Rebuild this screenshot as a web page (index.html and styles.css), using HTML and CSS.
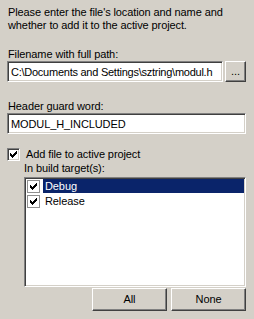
FILE: index.html
```html
<!DOCTYPE html>
<html lang="en">
<head>
  <meta charset="UTF-8" />
  <title>New File</title>
  <link rel="stylesheet" href="styles.css">
</head>
<body>
  <div class="dialog">
    <p class="intro">Please enter the file's location and name and<br>whether to add it to the active project.</p>

    <div class="field-label first">Filename with full path:</div>
    <div class="path-row">
      <input class="text-input path-input" type="text" value="C:\Documents and Settings\sztring\modul.h" />
      <button class="win-btn browse-btn">...</button>
    </div>

    <div class="field-label second">Header guard word:</div>
    <input class="text-input full" type="text" value="MODUL_H_INCLUDED" />

    <div class="check-row">
      <span class="check-box">
        <svg width="13" height="13" viewBox="0 0 13 13"><polygon points="3,5 5,7 10,2 10,5 5,10 3,8" fill="#000" shape-rendering="crispEdges"/></svg>
      </span>
      <span>Add file to active project</span>
    </div>

    <div class="targets">
      <div class="targets-label">In build target(s):</div>
      <div class="target-list">
        <div class="target-row">
          <span class="list-check">
            <svg width="11" height="11" viewBox="1 1 11 11"><polygon points="3,5 5,7 10,2 10,5 5,10 3,8" fill="#000" shape-rendering="crispEdges"/></svg>
          </span>
          <span class="target-name selected">Debug</span>
        </div>
        <div class="target-row">
          <span class="list-check">
            <svg width="11" height="11" viewBox="1 1 11 11"><polygon points="3,5 5,7 10,2 10,5 5,10 3,8" fill="#000" shape-rendering="crispEdges"/></svg>
          </span>
          <span class="target-name">Release</span>
        </div>
      </div>
      <div class="list-buttons">
        <button class="win-btn wide-btn">All</button>
        <button class="win-btn wide-btn">None</button>
      </div>
    </div>
  </div>
</body>
</html>
```

FILE: styles.css
```css
body {
  margin: 0;
  background: #d4d0c8;
  font-family: 'Liberation Sans', Arial, sans-serif;
  font-size: 11px;
  line-height: 13px;
  letter-spacing: -0.1px;
  color: #000;
}

.dialog {
  width: 239px;
  padding: 6px 8px 0 7px;
}

.intro {
  margin: 0 0 0 1px;
}

.field-label {
  padding-left: 1px;
}

.field-label.first {
  margin-top: 16px;
}

.field-label.second {
  margin-top: 18px;
}

.path-row {
  display: flex;
  gap: 2px;
}

.text-input {
  box-sizing: border-box;
  height: 21px;
  min-width: 0;
  flex: 1;
  margin: 0;
  padding: 0 2px 0 3px;
  font: inherit;
  letter-spacing: inherit;
  color: #000;
  background: #fff;
  border: 1px solid;
  border-color: #808080 #fff #fff #808080;
  box-shadow: inset 1px 1px #404040, inset -1px -1px #d4d0c8;
  outline: none;
}

.path-input {
  letter-spacing: -0.25px;
}

.text-input.full {
  display: block;
  width: 100%;
}

.win-btn {
  box-sizing: border-box;
  margin: 0;
  padding: 0;
  font: inherit;
  letter-spacing: inherit;
  color: #000;
  background: #d4d0c8;
  border: 1px solid;
  border-color: #fff #404040 #404040 #fff;
  box-shadow: inset -1px -1px #808080;
}

.browse-btn {
  width: 21px;
  height: 21px;
  line-height: 17px;
}

.check-row {
  display: flex;
  align-items: center;
  gap: 6px;
  height: 15px;
  margin-top: 13px;
}

.check-box {
  box-sizing: border-box;
  width: 13px;
  height: 13px;
  background: #fff;
  border: 1px solid;
  border-color: #808080 #fff #fff #808080;
  box-shadow: inset 1px 1px #404040, inset -1px -1px #d4d0c8;
  position: relative;
}

.check-box svg {
  position: absolute;
  left: -1px;
  top: -1px;
}

.targets {
  padding-left: 17px;
}

.target-list {
  box-sizing: border-box;
  height: 110px;
  margin-top: 2px;
  padding: 1px 1px 0 1px;
  background: #fff;
  border: 1px solid;
  border-color: #808080 #fff #fff #808080;
  box-shadow: inset 1px 1px #404040, inset -1px -1px #d4d0c8;
  display: flex;
  flex-direction: column;
  gap: 1px;
}

.target-row {
  display: flex;
  align-items: center;
  height: 14px;
  padding-left: 1px;
}

.list-check {
  box-sizing: border-box;
  width: 13px;
  height: 13px;
  border: 1px solid #909090;
  background: #fff;
}

.list-check svg {
  display: block;
}

.target-name {
  flex: 1;
  height: 14px;
  margin-left: 3px;
  padding-left: 2px;
  line-height: 14px;
}

.target-name.selected {
  background: #0a246a;
  color: #fff;
}

.list-buttons {
  display: flex;
  justify-content: flex-end;
  gap: 4px;
  margin-top: 1px;
}

.wide-btn {
  width: 75px;
  height: 23px;
}
```
